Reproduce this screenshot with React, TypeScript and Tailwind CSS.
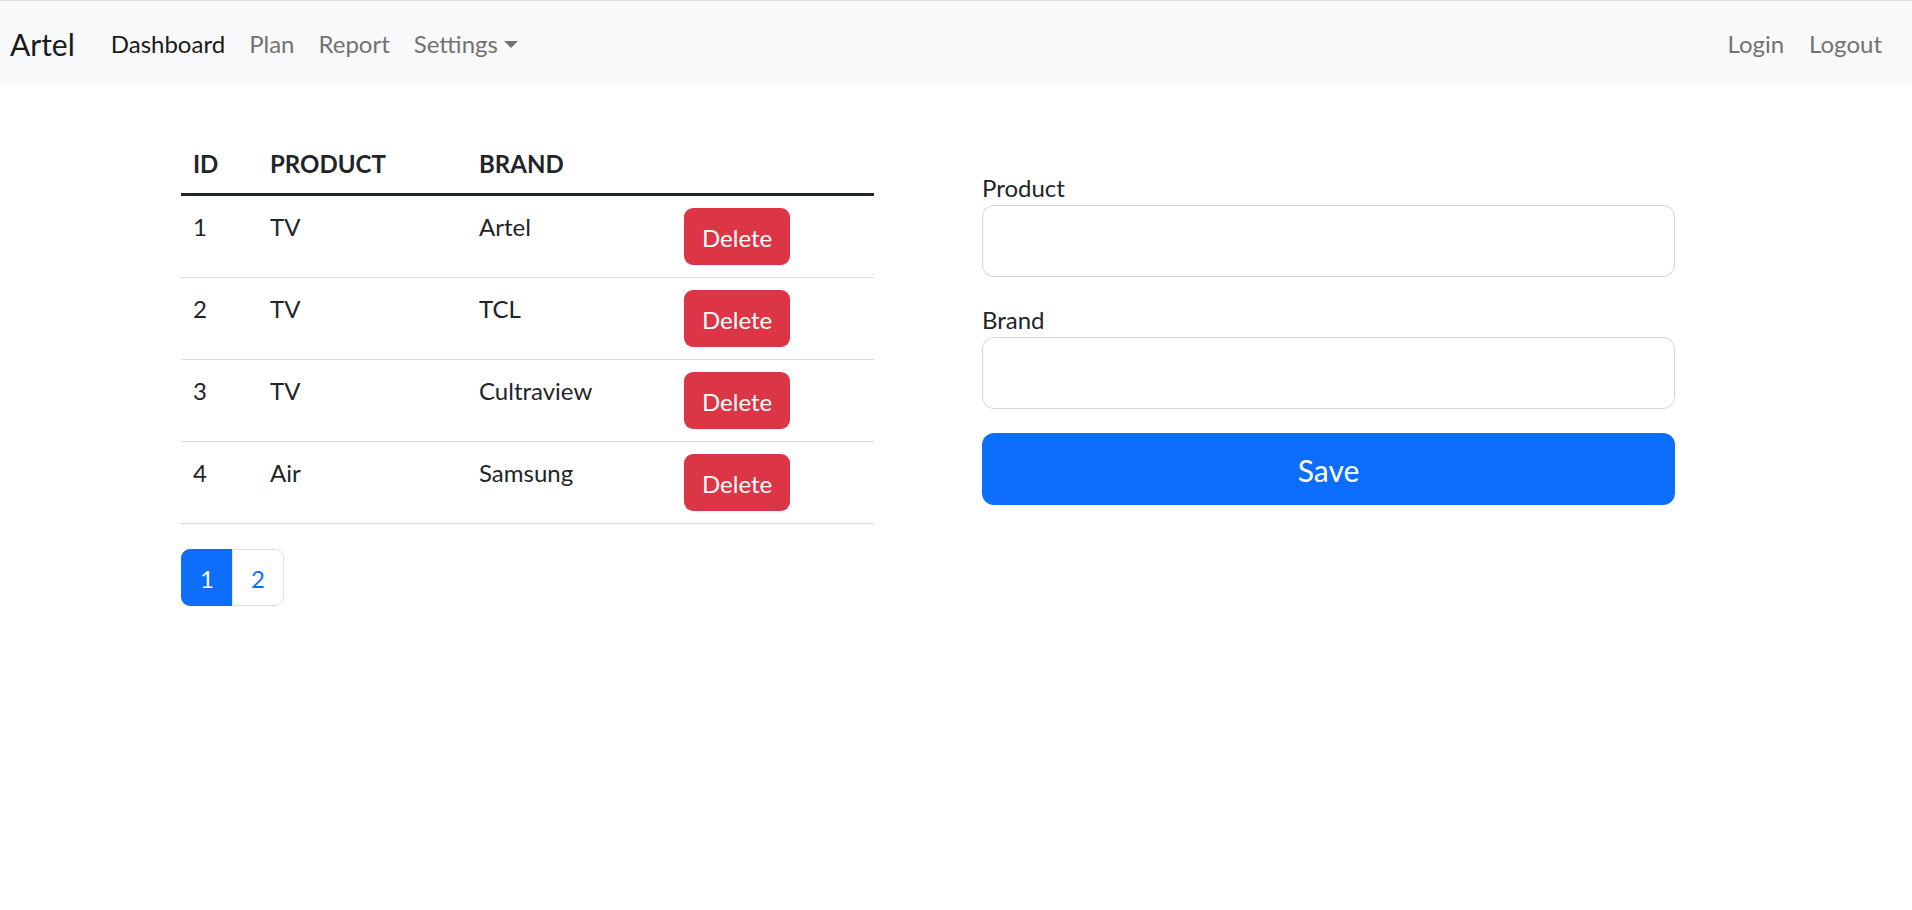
import React, { useState } from "react";

type ItemT = {
  id: number;
  product: string;
  brand: string;
};

const items: ItemT[] = [
  { id: 1, product: "TV", brand: "Artel" },
  { id: 2, product: "TV", brand: "TCL" },
  { id: 3, product: "TV", brand: "Cultraview" },
  { id: 4, product: "Air", brand: "Samsung" },
];

const Navbar = () => (
  <nav className="flex h-[85px] items-center justify-between border-t border-[#dcdcdc] bg-[#f8f9fa] pl-[10px] pr-[18px]">
    <div className="flex items-center">
      <a className="mr-[24px] pt-[2px] text-[30px] leading-[45px] text-[#1a1a1a]">Artel</a>
      <ul className="flex items-center text-[24px] leading-[36px]">
        <li className="px-[12px] pb-[11px] pt-[13px] text-[#1a1a1a]">Dashboard</li>
        <li className="px-[12px] pb-[11px] pt-[13px] text-[#737373]">Plan</li>
        <li className="px-[12px] pb-[11px] pt-[13px] text-[#737373]">Report</li>
        <li className="flex items-center px-[12px] pb-[11px] pt-[13px] text-[#737373]">
          Settings
          <span className="ml-[6px] mt-[1px] h-0 w-0 border-x-[7px] border-t-[7px] border-x-transparent border-t-[#737373]" />
        </li>
      </ul>
    </div>
    <ul className="flex items-center text-[24px] leading-[36px] text-[#737373]">
      <li className="px-[13px] pb-[11px] pt-[13px]">Login</li>
      <li className="px-[12px] pb-[11px] pt-[13px]">Logout</li>
    </ul>
  </nav>
);

const ProductTable = () => {
  const [page, setPage] = useState(1);

  return (
    <div className="w-[693px]">
      <table className="w-full table-fixed text-left text-[24px] leading-[36px] text-[#212529]">
        <colgroup>
          <col className="w-[77px]" />
          <col className="w-[209px]" />
          <col className="w-[205px]" />
          <col className="w-[202px]" />
        </colgroup>
        <thead>
          <tr className="border-b-[3px] border-[#212529]">
            <th className="px-[12px] pb-[11px] pt-[13px] align-top font-bold">ID</th>
            <th className="px-[12px] pb-[11px] pt-[13px] align-top font-bold">PRODUCT</th>
            <th className="px-[12px] pb-[11px] pt-[13px] align-top font-bold">BRAND</th>
            <th className="p-[12px]" />
          </tr>
        </thead>
        <tbody>
          {items.map((item) => (
            <tr key={item.id} className="border-b border-[#d9dde1]">
              <td className="px-[12px] pt-[13px] align-top">{item.id}</td>
              <td className="px-[12px] pt-[13px] align-top">{item.product}</td>
              <td className="px-[12px] pt-[13px] align-top">{item.brand}</td>
              <td className="p-[12px] align-top">
                <button className="h-[57px] rounded-[9px] bg-[#dc3545] px-[18px] pt-[2px] text-[24px] leading-[36px] text-white">
                  Delete
                </button>
              </td>
            </tr>
          ))}
        </tbody>
      </table>
      <ul className="mt-[25px] flex text-[24px] leading-[36px]">
        {[1, 2].map((n) => (
          <li key={n}>
            <button
              onClick={() => setPage(n)}
              className={
                n === page
                  ? "h-[57px] rounded-l-[9px] border border-[#0d6efd] bg-[#0d6efd] px-[18px] pt-[2px] text-white"
                  : "-ml-px h-[57px] rounded-r-[9px] border border-[#dee2e6] bg-white px-[18px] pt-[2px] text-[#0d6efd]"
              }
            >
              {n}
            </button>
          </li>
        ))}
      </ul>
    </div>
  );
};

const ProductForm = () => {
  const [product, setProduct] = useState("");
  const [brand, setBrand] = useState("");

  return (
    <form className="mt-[36px] w-[693px] text-[24px] leading-[36px] text-[#212529]">
      <div className="mb-[24px]">
        <label className="block pt-[2px] leading-[34px]">Product</label>
        <input
          value={product}
          onChange={(e) => setProduct(e.target.value)}
          className="block h-[72px] w-full rounded-[12px] border border-[#ced4da] bg-white px-[24px] text-[30px] outline-none"
        />
      </div>
      <div className="mb-[24px]">
        <label className="block pt-[2px] leading-[34px]">Brand</label>
        <input
          value={brand}
          onChange={(e) => setBrand(e.target.value)}
          className="block h-[72px] w-full rounded-[12px] border border-[#ced4da] bg-white px-[24px] text-[30px] outline-none"
        />
      </div>
      <button
        type="button"
        className="block h-[72px] w-full rounded-[12px] bg-[#0d6efd] pt-[2px] text-[30px] leading-[45px] text-white"
      >
        Save
      </button>
    </form>
  );
};

export default function App() {
  return (
    <div className="min-h-screen bg-white font-['Segoe_UI',Lato,sans-serif]">
      <Navbar />
      <main className="flex gap-[108px] pl-[181px] pt-[48px]">
        <ProductTable />
        <ProductForm />
      </main>
    </div>
  );
}
